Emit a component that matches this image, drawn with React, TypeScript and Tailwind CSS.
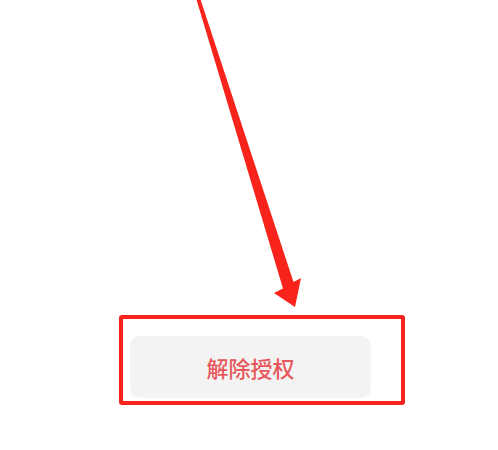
export default function App() {
  return (
    <div className="w-[498px] h-[450px] bg-white font-['Noto_Sans_CJK_SC','Noto_Sans',sans-serif]">
      {/* annotation arrow */}
      <svg width="498" height="315" viewBox="0 0 498 315" className="block">
        <polygon
          fill="#f8231a"
          points="196,-2 200,-2 293.5,282 301,278 295,307 274,293 283,288.5"
        />
      </svg>

      <div className="ml-[119px] w-[286px] h-[90px] border-4 border-[#f8231a] rounded-[3px] pl-[7px] pt-[17px]">
        <button className="w-[241px] h-[62px] rounded-[10px] bg-[#f3f3f3] text-[22px] font-medium leading-none text-[#e8575a]">
          解除授权
        </button>
      </div>
    </div>
  );
}
